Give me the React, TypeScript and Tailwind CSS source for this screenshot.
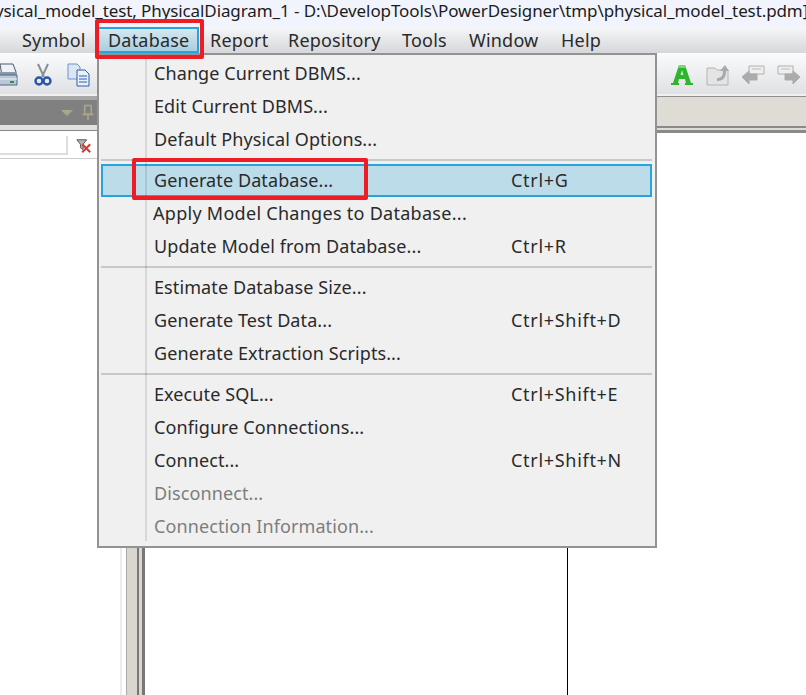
import React from 'react';

const font = { fontFamily: '"Noto Sans", "Open Sans", sans-serif' };

type Entry = { label: string; keys?: string; disabled?: boolean; active?: boolean; shift?: boolean };

const groups: Entry[][] = [
  [{ label: 'Change Current DBMS...' }, { label: 'Edit Current DBMS...' }, { label: 'Default Physical Options...' }],
  [
    { label: 'Generate Database...', keys: 'Ctrl+G', active: true },
    { label: 'Apply Model Changes to Database...', shift: true },
    { label: 'Update Model from Database...', keys: 'Ctrl+R' },
  ],
  [
    { label: 'Estimate Database Size...' },
    { label: 'Generate Test Data...', keys: 'Ctrl+Shift+D' },
    { label: 'Generate Extraction Scripts...' },
  ],
  [
    { label: 'Execute SQL...', keys: 'Ctrl+Shift+E' },
    { label: 'Configure Connections...' },
    { label: 'Connect...', keys: 'Ctrl+Shift+N' },
    { label: 'Disconnect...', disabled: true },
    { label: 'Connection Information...', disabled: true },
  ],
];

const MenuRow = ({ item }: { item: Entry }) => (
  <div
    className={`flex h-[33px] items-center text-[18px] ${
      item.active ? 'border-2 border-[#28a4dc] bg-[#bcdcea]' : ''
    } ${item.disabled ? 'text-[#7d7d7d]' : 'text-[#2a2a2a]'}`}
  >
    <span className={`${item.active ? 'w-[44px]' : 'w-[46px]'} shrink-0`} />
    <span
      className={`${item.shift ? 'pl-[6px] tracking-[0.28px]' : 'pl-[7px] tracking-[0.1px]'} w-[364px] shrink-0 whitespace-nowrap`}
    >
      {item.label}
    </span>
    {item.keys && <span className="whitespace-nowrap tracking-[0.7px]">{item.keys}</span>}
  </div>
);

const Printer = () => (
  <svg width="24" height="24" viewBox="0 0 24 24">
    <path d="M6 1h13l3 8v4H8z" fill="#eef1f5" stroke="#4d5a68" />
    <path d="M4 9h18v3H4z" fill="#8b98a6" />
    <path d="M2 12h21v10H2z" fill="#b9c7d6" stroke="#4d6a8a" />
    <path d="M2 16h21" stroke="#eef3f8" />
    <path d="M16 19h4" stroke="#3a8a3a" strokeWidth="2" />
  </svg>
);

const ScissorsIcon = () => (
  <svg width="18" height="24" viewBox="0 0 18 24">
    <path d="M4 1l6 13M14 1L8 14" stroke="#8a8f96" strokeWidth="2" fill="none" />
    <circle cx="5" cy="18" r="3.5" fill="none" stroke="#2a55a8" strokeWidth="2.4" />
    <circle cx="13" cy="18" r="3.5" fill="none" stroke="#2a55a8" strokeWidth="2.4" />
  </svg>
);

const CopyIcon = () => (
  <svg width="24" height="24" viewBox="0 0 24 24">
    <path d="M1 1h9l3 3v12H1z" fill="#dbe6f5" stroke="#6f93c8" />
    <path d="M10 7h8l4 4v12H10z" fill="#e9f0fa" stroke="#2f5fa8" />
    <path d="M12 13h8M12 16h8M12 19h8" stroke="#2f5fa8" />
  </svg>
);

const FilterOff = () => (
  <svg width="16" height="16" viewBox="0 0 18 18">
    <path d="M1 2h11L8 7v6L5 11V7z" fill="#b5b5b5" stroke="#4a4a4a" />
    <path d="M7 7l9 9M16 7l-9 9" stroke="#e0322c" strokeWidth="2.2" />
  </svg>
);

const GreenA = () => (
  <svg width="24" height="22" viewBox="0 0 24 22">
    <path d="M9 1h6l6 18h2v2h-8v-2h1l-1-4H9l-1 4h1v2H1v-2h2z" fill="#2db52d" />
    <path d="M10.5 11h3L12 6z" fill="#c9ecc9" />
    <path d="M9 1h6l1 3H8z" fill="#7fd07f" />
  </svg>
);

const FolderUp = () => (
  <svg width="24" height="22" viewBox="0 0 24 22">
    <path d="M1 4h8l2 2h11v15H1z" fill="#e4e4e4" stroke="#b4b4b4" />
    <path d="M11 14c4 0 6-2 6-7h-3l5-6 4 6h-3c0 7-3 10-9 10z" fill="#a9a9a9" />
  </svg>
);

const ArrowLeft = () => (
  <svg width="24" height="22" viewBox="0 0 24 22">
    <path d="M8 2h15v8H8z" fill="#efefef" stroke="#b0b0b0" />
    <path d="M11 5h9" stroke="#bcbcbc" />
    <path d="M1 13l7-6v3h8v6H8v4z" fill="#ababab" stroke="#ababab" />
  </svg>
);

const ArrowRight = () => (
  <svg width="24" height="22" viewBox="0 0 24 22">
    <path d="M1 2h15v8H1z" fill="#efefef" stroke="#b0b0b0" />
    <path d="M4 5h9" stroke="#bcbcbc" />
    <path d="M23 13l-7-6v3H8v6h8v4z" fill="#ababab" stroke="#ababab" />
  </svg>
);

const Pin = () => (
  <svg width="12" height="17" viewBox="0 0 12 18">
    <path d="M2.5 1.5h7v9h-7zM0 11h12M6 11v6" fill="none" stroke="#aaa68c" strokeWidth="1.6" />
  </svg>
);

export default function App() {
  return (
    <div className="relative h-[695px] w-[806px] overflow-hidden bg-white text-[#222]" style={font}>
      {/* window title */}
      <div className="h-[27px] overflow-hidden whitespace-nowrap bg-[#f1f4fc] text-[17px] leading-[22px] tracking-[-0.1px] text-[#1c1c1c]">
        <div className="-ml-[5px]">ysical_model_test, PhysicalDiagram_1 - D:\DevelopTools\PowerDesigner\tmp\physical_model_test.pdm]</div>
      </div>

      {/* menu bar */}
      <div className="flex h-[26px] items-center bg-gradient-to-b from-[#f6f7f9] to-[#d5d7da] text-[18px] tracking-[0.2px] text-[#2a2a2a]">
        <span className="ml-[22px] w-[75px]">Symbol</span>
        <span className="flex h-[26px] w-[102px] items-center border-2 border-[#28a4dc] bg-gradient-to-b from-[#d5e8f1] to-[#a9cfe0] pl-[9px]">Database</span>
        <span className="ml-[11px] w-[78px]">Report</span>
        <span className="w-[114px]">Repository</span>
        <span className="w-[67px]">Tools</span>
        <span className="w-[92px]">Window</span>
        <span>Help</span>
      </div>

      {/* toolbar */}
      <div className="flex h-[43px] items-center border-b-2 border-[#f0f0f0] bg-gradient-to-b from-[#fafbfc] to-[#dfe1e4] pt-[2px]">
        <div className="-ml-[6px] flex w-[657px] items-center">
          <Printer />
          <div className="ml-[16px]"><ScissorsIcon /></div>
          <div className="ml-[15px]"><CopyIcon /></div>
        </div>
        <div className="ml-[19px] flex items-center">
          <GreenA />
          <div className="ml-[12px]"><FolderUp /></div>
          <div className="ml-[11px]"><ArrowLeft /></div>
          <div className="ml-[12px]"><ArrowRight /></div>
        </div>
      </div>

      {/* tab strip and workspace */}
      <div className="flex h-[599px]">
        <div className="w-[120px] shrink-0">
          <div className="h-[4px] bg-[#a8a8a8]" />
          <div className="flex h-[25px] items-center justify-end gap-[9px] bg-[#808080] pr-[26px]">
            <div className="h-0 w-0 border-x-[6px] border-t-[6px] border-x-transparent border-t-[#aaa68c]" />
            <Pin />
          </div>
          <div className="h-[5px] bg-[#e0e0e0]" />
          <div className="h-[1px] bg-[#888]" />
          <div className="mt-[4px] flex h-[20px] items-center">
            <div className="h-[19px] w-[68px] border-r-2 border-b-2 border-[#ddd] bg-white" />
            <div className="ml-[8px] mt-[1px]"><FilterOff /></div>
          </div>
          <div className="mt-[3px] h-[1px] bg-[#ccc]" />
        </div>
        <div className="flex h-full shrink-0">
          <div className="w-[2px] bg-[#ececec]" />
          <div className="w-[4px] bg-white" />
          <div className="w-[1px] bg-[#aaa]" />
          <div className="w-[10px] bg-[#d9d5cf]" />
          <div className="w-[2px] bg-[#777]" />
          <div className="w-[3px] bg-[#d9d5cf]" />
          <div className="w-[3px] bg-[#777]" />
        </div>
        <div className="flex-1">
          <div className="h-[1px] bg-[#8f8f8f]" />
          <div className="h-[29px] bg-[#dfdcd6]" />
          <div className="h-[2px] bg-[#8a8a8a]" />
          <div className="h-[2px] bg-[#dfdcd6]" />
          <div className="h-[3px] bg-[#8a8a8a]" />
          <div className="ml-[422px] h-[562px] w-[1px] bg-black" />
        </div>
      </div>

      {/* Database dropdown */}
      <div className="absolute left-[97px] top-[53px] h-[495px] w-[560px] border-2 border-[#939393] bg-[#f0f0f0] pt-[2px] pl-[2px] pr-[3px]">
        {groups.map((group, i) => (
          <div key={i}>
            {i > 0 && (
              <div className="h-[8px] pt-[3px]">
                <div className="h-[2px] w-full bg-[#c8c8c8]" />
              </div>
            )}
            {group.map((item) => (
              <MenuRow key={item.label} item={item} />
            ))}
          </div>
        ))}
        <div className="absolute left-[46px] top-[3px] h-[483px] w-[2px] bg-black/10" />
      </div>

      {/* red annotation boxes */}
      <div className="absolute left-[95px] top-[19px] h-[40px] w-[109px] rounded-[2px] border-[4px] border-[#ee1c25]" />
      <div className="absolute left-[132px] top-[158px] h-[42px] w-[236px] rounded-[2px] border-[4px] border-[#ee1c25]" />
    </div>
  );
}
